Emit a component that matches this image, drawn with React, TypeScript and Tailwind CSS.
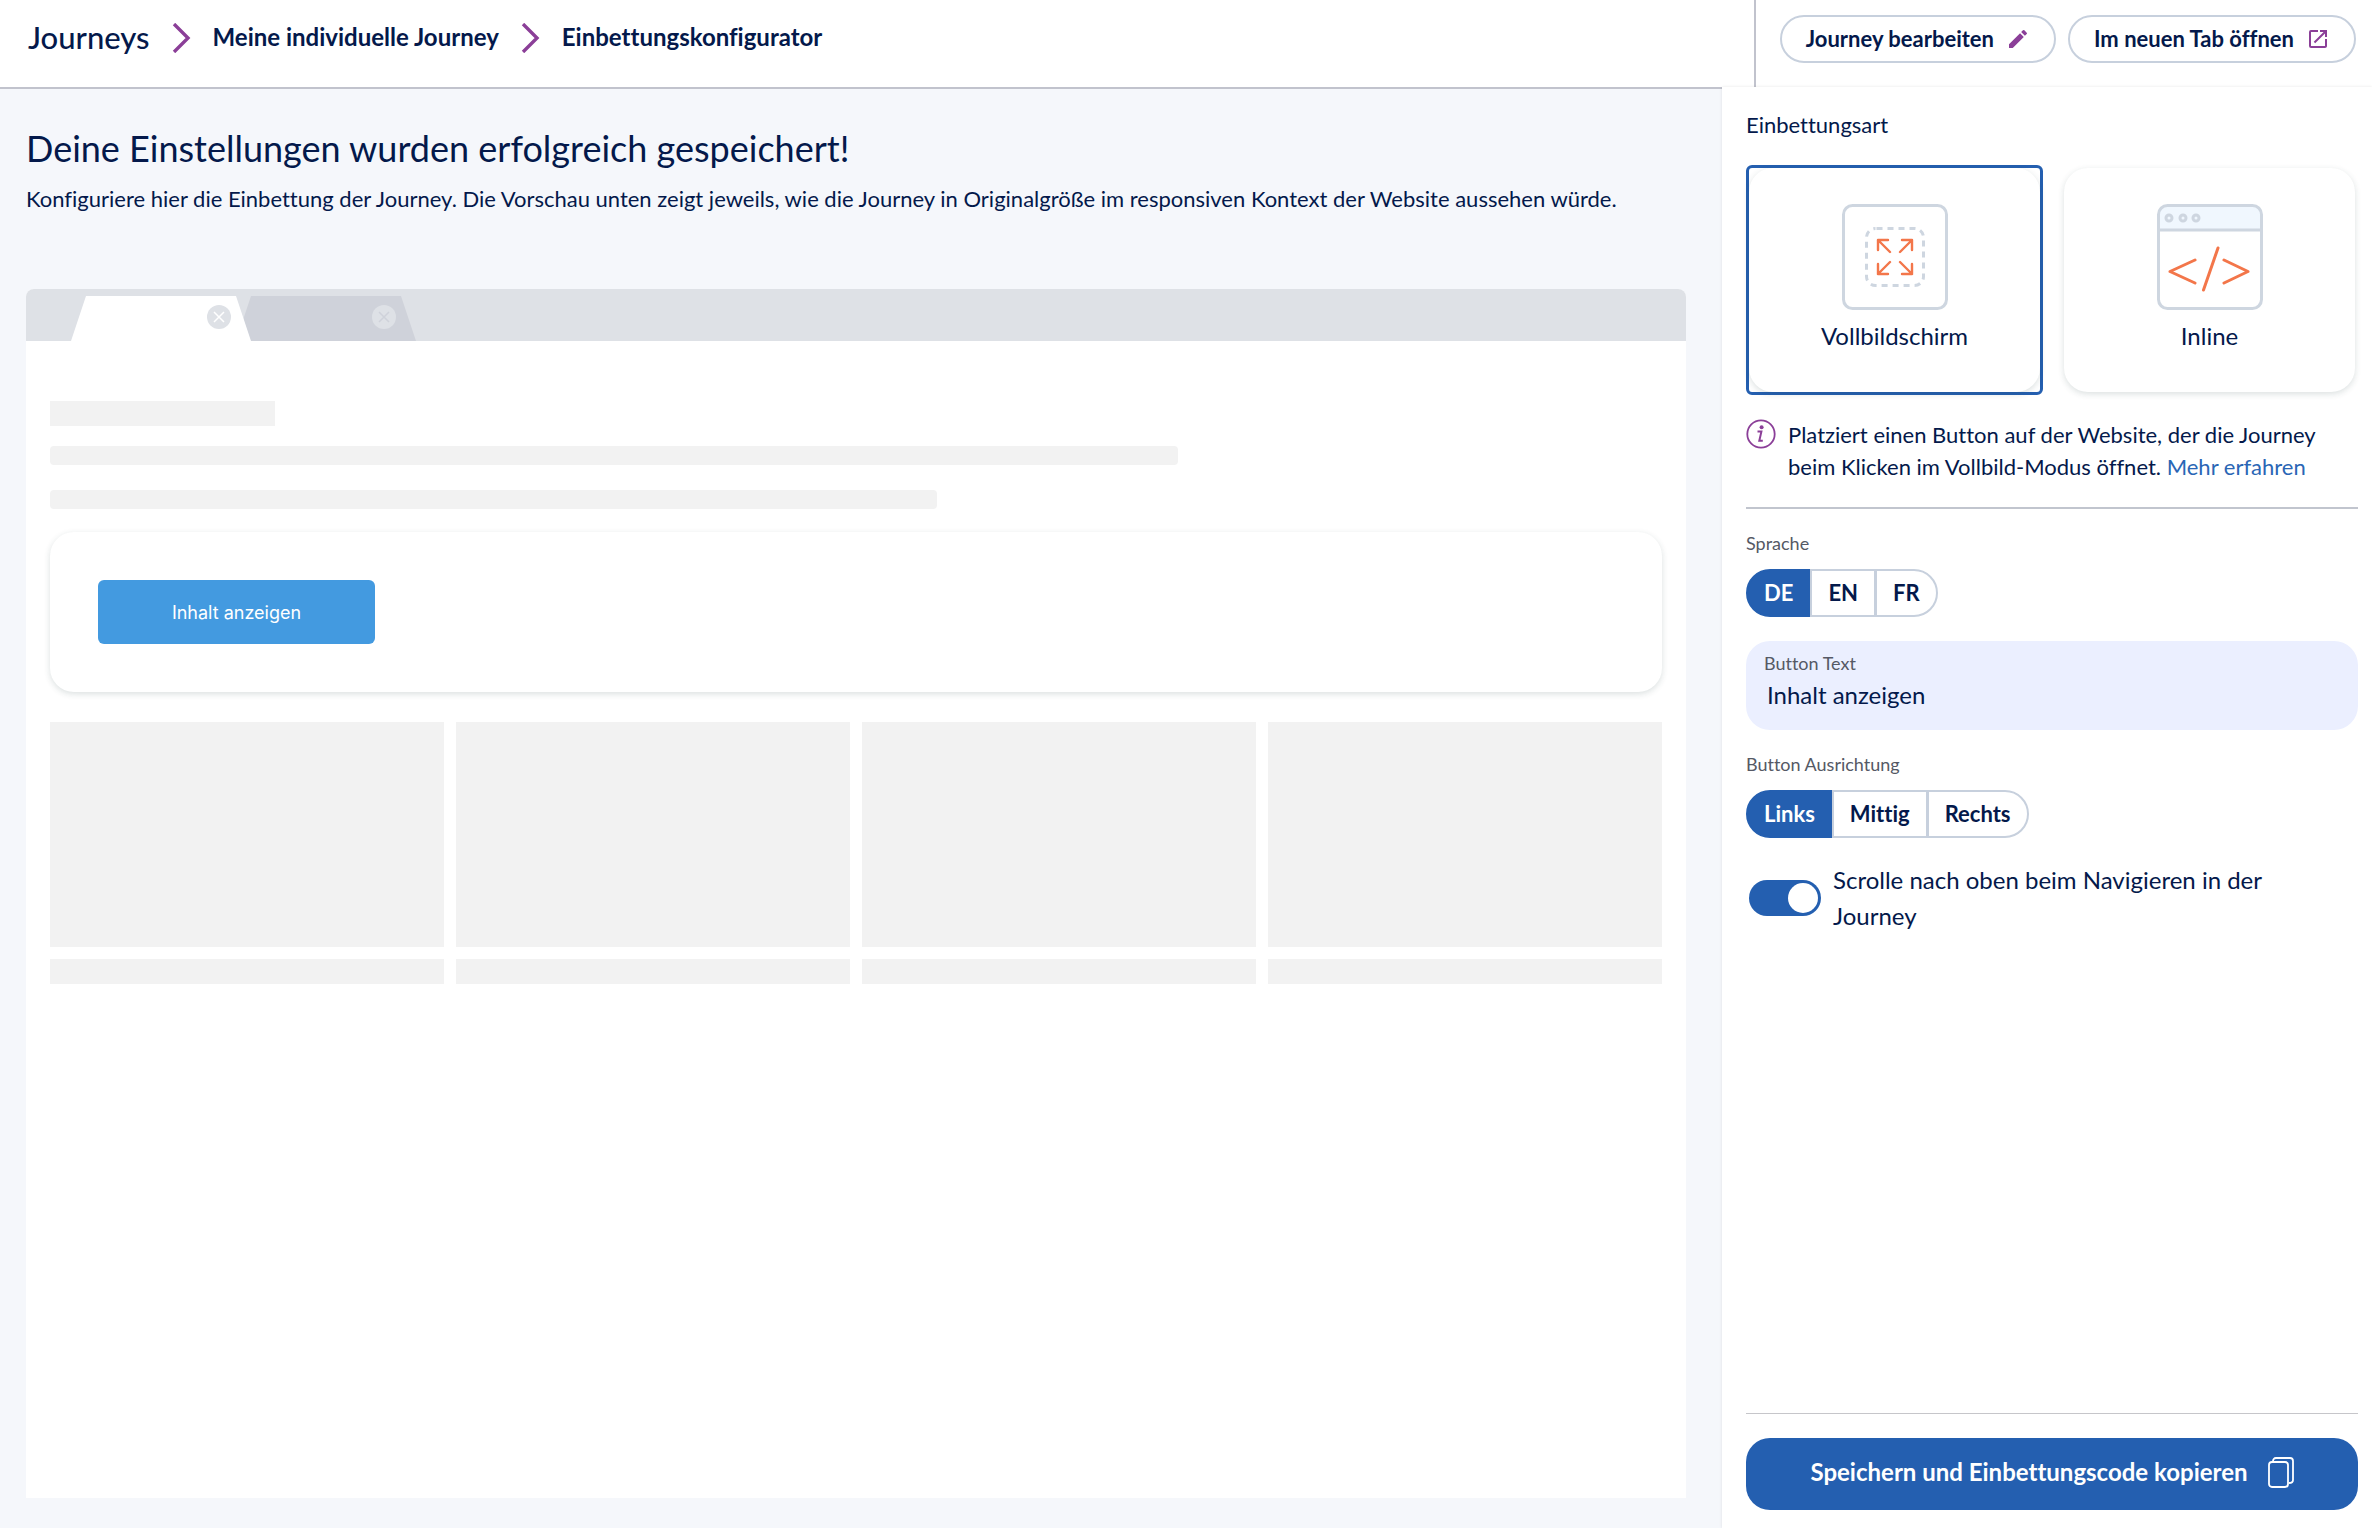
import { useState } from "react"
import { MdEdit, MdOpenInNew } from "react-icons/md"

function ChevronIcon() {
  return (
    <svg width="19" height="30" viewBox="0 0 19 30" fill="none" aria-hidden="true">
      <path d="M2 1L16 15L2 29" stroke="#8b3f98" strokeWidth="3.4" />
    </svg>
  )
}

function FullscreenIcon() {
  return (
    <svg width="106" height="106" viewBox="0 0 106 106" fill="none" aria-hidden="true">
      <rect x="1.5" y="1.5" width="103" height="103" rx="9" stroke="#ced6e0" strokeWidth="3" />
      <rect
        x="24.5"
        y="24.5"
        width="57"
        height="57"
        rx="9"
        stroke="#ced6e0"
        strokeWidth="3"
        strokeDasharray="6 5"
        strokeDashoffset="10"
      />
      <path
        d="M36 46V36H46M36 36L48 48M60 36H70V46M70 36L58 48M36 60V70H46M36 70L48 58M60 70H70V60M70 70L58 58"
        stroke="#f3764a"
        strokeWidth="2.4"
        strokeLinecap="round"
        strokeLinejoin="round"
      />
    </svg>
  )
}

function InlineIcon() {
  return (
    <svg width="106" height="106" viewBox="0 0 106 106" fill="none" aria-hidden="true">
      <path d="M2 26V11C2 6 6 2 11 2H95C100 2 104 6 104 11V26Z" fill="#f0f7fe" />
      <rect x="1.5" y="1.5" width="103" height="103" rx="9" stroke="#ced6e0" strokeWidth="3" />
      <path d="M1 26H105" stroke="#ced6e0" strokeWidth="3" />
      <circle cx="12" cy="14" r="3" stroke="#ced6e0" strokeWidth="3" />
      <circle cx="26" cy="14" r="3" stroke="#ced6e0" strokeWidth="3" />
      <circle cx="39" cy="14" r="3" stroke="#ced6e0" strokeWidth="3" />
      <path
        d="M38 56L13 67.5L38 79M61 44L46.5 86M67 56L91 67.5L67 79"
        stroke="#f3764a"
        strokeWidth="3"
        strokeLinecap="round"
        strokeLinejoin="round"
      />
    </svg>
  )
}

function InfoIcon() {
  return (
    <svg className="shrink-0" width="30" height="30" viewBox="0 0 30 30" fill="none" aria-hidden="true">
      <circle cx="15" cy="15" r="13.7" stroke="#8b3f98" strokeWidth="1.8" />
      <circle cx="15.6" cy="8.3" r="2" fill="#8b3f98" />
      <path d="M11.5 12.6H15.4L13.3 21.8H16.8" stroke="#8b3f98" strokeWidth="2" />
    </svg>
  )
}

function CopyIcon() {
  return (
    <svg width="26" height="31" viewBox="0 0 26 31" fill="none" aria-hidden="true">
      <rect x="1" y="5" width="19" height="25" rx="3" stroke="white" strokeWidth="1.8" />
      <path d="M5 4.5C5 2.5 6 1 8 1H22C24 1 25 2 25 4V23C25 25 23.5 26 21 26" stroke="white" strokeWidth="1.8" />
    </svg>
  )
}

function BrowserTabs() {
  return (
    <svg width="400" height="52" viewBox="0 0 400 52" fill="none" aria-hidden="true">
      <path d="M225 7H375L390 52H210Z" fill="#cfd2da" />
      <path d="M60 7H210L225 52H45Z" fill="white" />
      <circle cx="193" cy="28" r="12" fill="#dee1e6" />
      <path d="M188 23L198 33M198 23L188 33" stroke="white" strokeWidth="1.5" />
      <circle cx="358" cy="28" r="12" fill="#dee1e6" />
      <path d="M353 23L363 33M363 23L353 33" stroke="#cfd2da" strokeWidth="1.5" />
    </svg>
  )
}

interface SegmentedProps {
  name: string
  label: string
  options: string[]
  value: string
  onChange: (value: string) => void
}

function Segmented({ name, label, options, value, onChange }: SegmentedProps) {
  return (
    <fieldset className="mt-[22px]">
      <legend className="text-lg leading-6 text-[#555965]">{label}</legend>
      <div className="mt-[14px] flex">
        {options.map((option) => (
          <label
            key={option}
            className="-ml-px flex h-12 cursor-pointer items-center border-2 border-[#c7d0dd] px-4 pb-px text-[22px] font-bold first:ml-0 first:rounded-l-full last:rounded-r-full has-checked:border-[#245fb0] has-checked:bg-[#245fb0] has-checked:text-white"
          >
            <input
              type="radio"
              name={name}
              value={option}
              checked={value === option}
              onChange={() => onChange(option)}
              className="sr-only"
            />
            {option}
          </label>
        ))}
      </div>
    </fieldset>
  )
}

const embedTypes = [
  { id: "fullscreen", label: "Vollbildschirm", icon: <FullscreenIcon /> },
  { id: "inline", label: "Inline", icon: <InlineIcon /> },
]

export default function App() {
  const [embedType, setEmbedType] = useState("fullscreen")
  const [language, setLanguage] = useState("DE")
  const [alignment, setAlignment] = useState("Links")
  const [buttonText, setButtonText] = useState("Inhalt anzeigen")
  const [scrollTop, setScrollTop] = useState(true)

  return (
    <div className="flex min-h-screen flex-col bg-white font-['Lato',sans-serif] text-[#04194b] [font-variant-ligatures:none]">
      <header className="flex h-[87px] justify-between">
        <nav className="flex items-start gap-[22px] pt-[23px] pl-7 text-2xl leading-7 font-bold">
          <a href="#journeys" className="text-[31px] font-medium">Journeys</a>
          <ChevronIcon />
          <a href="#journey">Meine individuelle Journey</a>
          <ChevronIcon />
          <span>Einbettungskonfigurator</span>
        </nav>
        <div className="flex items-start gap-3 border-l-2 border-[#c1c3cd] pt-[15px] pr-4 pl-6 text-[22px] font-bold">
          <button className="flex h-12 items-center gap-3 rounded-full border-2 border-[#c7d0dd] px-6 pb-px">
            Journey bearbeiten
            <MdEdit size={24} color="#8b3f98" />
          </button>
          <button className="flex h-12 items-center gap-3 rounded-full border-2 border-[#c7d0dd] px-6 pb-px">
            Im neuen Tab öffnen
            <MdOpenInNew size={24} color="#8b3f98" />
          </button>
        </div>
      </header>

      <div className="flex grow">
        <main className="flex grow flex-col border-t-2 border-[#c1c3cd] bg-[#f5f7fb] pt-[39px] pr-9 pb-[30px] pl-[26px]">
          <h1 className="text-4xl leading-10">Deine Einstellungen wurden erfolgreich gespeichert!</h1>
          <p className="mt-[15px] text-[22px] leading-8">
            Konfiguriere hier die Einbettung der Journey. Die Vorschau unten zeigt jeweils, wie die Journey in Originalgröße im responsiven Kontext der Website aussehen würde.
          </p>

          <section className="mt-[74px] flex grow flex-col overflow-hidden rounded-t-lg bg-white">
            <div className="h-[52px] bg-[#dee1e6]">
              <BrowserTabs />
            </div>
            <div className="px-6 pt-[60px]">
              <div className="h-[25px] w-[225px] bg-[#f2f2f2]" />
              <div className="mt-5 h-[19px] w-[70%] rounded-sm bg-[#f2f2f2]" />
              <div className="mt-[25px] h-[19px] w-[55%] rounded-sm bg-[#f2f2f2]" />
              <div className="mt-[23px] rounded-3xl p-12 shadow-[0_2px_6px_rgba(30,60,60,0.16)]">
                <button className="h-16 w-[277px] rounded-md bg-[#439ae0] pt-px font-['Inter',sans-serif] text-lg text-white">
                  {buttonText}
                </button>
              </div>
              <div className="mt-[30px] grid grid-cols-4 gap-3">
                {[0, 1, 2, 3].map((i) => (
                  <div key={i} className="flex flex-col gap-3">
                    <div className="h-[225px] bg-[#f2f2f2]" />
                    <div className="h-[25px] bg-[#f2f2f2]" />
                  </div>
                ))}
              </div>
            </div>
          </section>
        </main>

        <aside className="flex w-[650px] shrink-0 flex-col pt-[22px] pr-[14px] pb-[18px] pl-6 shadow-[0_0_3px_rgba(0,0,0,0.1)]">
          <fieldset>
            <legend className="text-[22px] leading-8">Einbettungsart</legend>
            <div className="mt-6 grid grid-cols-2 gap-[18px]">
              {embedTypes.map((type) => (
                <label key={type.id} className="cursor-pointer rounded-md border-3 border-transparent has-checked:border-[#245fb0]">
                  <input
                    type="radio"
                    name="embedType"
                    checked={embedType === type.id}
                    onChange={() => setEmbedType(type.id)}
                    className="sr-only"
                  />
                  <span className="flex h-56 flex-col items-center rounded-3xl pt-9 text-2xl shadow-[0_2px_6px_rgba(30,60,60,0.16)]">
                    {type.icon}
                    <span className="mt-2 leading-9">{type.label}</span>
                  </span>
                </label>
              ))}
            </div>
          </fieldset>

          <div className="mt-6 flex gap-3 border-b-2 border-[#c1c5ce] pb-6 text-[22px] leading-8">
            <InfoIcon />
            <p>
              Platziert einen Button auf der Website, der die Journey beim Klicken im Vollbild-Modus öffnet.{" "}
              <a href="#mehr" className="text-[#2a66b5]">Mehr erfahren</a>
            </p>
          </div>

          <Segmented name="language" label="Sprache" options={["DE", "EN", "FR"]} value={language} onChange={setLanguage} />

          <label className="mt-6 block h-[89px] rounded-3xl bg-[#ebefff] px-[18px] pt-[10px]">
            <span className="block text-lg leading-6 text-[#555965]">Button Text</span>
            <input
              type="text"
              value={buttonText}
              onChange={(e) => setButtonText(e.target.value)}
              className="mt-[2px] block w-full bg-transparent px-[3px] text-2xl leading-9 outline-none"
            />
          </label>

          <Segmented name="alignment" label="Button Ausrichtung" options={["Links", "Mittig", "Rechts"]} value={alignment} onChange={setAlignment} />

          <label className="mt-6 flex cursor-pointer items-center gap-3 pr-10 pl-[3px] text-2xl leading-9">
            <input
              type="checkbox"
              role="switch"
              checked={scrollTop}
              onChange={(e) => setScrollTop(e.target.checked)}
              className="flex h-9 w-[72px] shrink-0 appearance-none rounded-full bg-[#c7d0dd] p-[3px] before:size-[30px] before:rounded-full before:bg-white checked:justify-end checked:bg-[#245fb0]"
            />
            Scrolle nach oben beim Navigieren in der Journey
          </label>

          <div className="mt-auto border-t border-[#c6c6ca] pt-6">
            <button className="flex h-[72px] w-full items-center justify-center gap-5 rounded-3xl bg-[#245fb0] pb-1 text-2xl font-bold text-white">
              Speichern und Einbettungscode kopieren
              <CopyIcon />
            </button>
          </div>
        </aside>
      </div>
    </div>
  )
}
